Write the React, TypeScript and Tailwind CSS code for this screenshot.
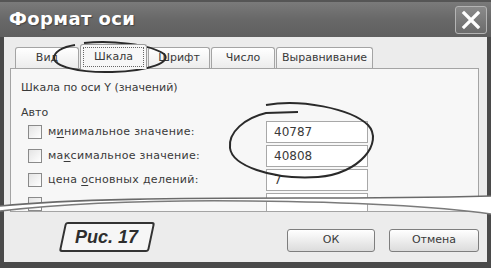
import React from 'react';

const tabs = [
  { label: 'Вид', w: 'w-[64px]', active: false },
  { label: 'Шкала', w: 'w-[67px]', active: true },
  { label: 'Шрифт', w: 'w-[62px]', active: false },
  { label: 'Число', w: 'w-[64px]', active: false },
  { label: 'Выравнивание', w: 'w-[97px]', active: false },
];

function Mnemonic({ before, key_, after }: { before: string; key_: string; after: string }) {
  return (
    <span>
      {before}
      <span className="underline underline-offset-2">{key_}</span>
      {after}
    </span>
  );
}

const rows = [
  { label: <Mnemonic before="м" key_="и" after="нимальное значение:" />, value: '40787' },
  { label: <Mnemonic before="ма" key_="к" after="симальное значение:" />, value: '40808' },
  { label: <Mnemonic before="цена " key_="о" after="сновных делений:" />, value: '7' },
  { label: null, value: '' },
];

export default function App() {
  return (
    <div
      className="relative w-[491px] h-[268px] overflow-hidden bg-[#4a4a4a] flex flex-col text-[#3a3a3a]"
      style={{ fontFamily: '"DejaVu Sans", Verdana, sans-serif' }}
    >
      {/* title bar */}
      <div className="h-[37px] flex justify-between bg-gradient-to-b from-[#7a7a7a] via-[#686868] to-[#5f5f5f] border-t-2 border-[#555]">
        <div className="pl-[9px] pt-[5px] text-[18px] leading-[24px] font-semibold text-white tracking-[0.4px] [text-shadow:1px_1px_1px_#444]">
          Формат оси
        </div>
        <div className="mt-[4px] mr-[4px] w-[32px] h-[28px] rounded-[3px] border border-[#b4b4b4] bg-gradient-to-b from-[#8a8a8a] to-[#6c6c6c] flex items-center justify-center">
          <svg width="20" height="20" viewBox="0 0 20 20">
            <path d="M3 3 L17 17 M17 3 L3 17" stroke="white" strokeWidth="3.2" strokeLinecap="square" />
          </svg>
        </div>
      </div>

      {/* body */}
      <div className="flex-1 mx-[4px] mb-[6px] bg-[#ececec] flex flex-col">
        {/* tabs */}
        <div className="h-[31px] pt-[7px] pl-[11px] flex items-end gap-[1px] text-[11px]">
          {tabs.map((t) =>
            t.active ? (
              <div
                key={t.label}
                className={`${t.w} h-[25px] -mb-px z-10 rounded-t-[3px] border border-b-0 border-[#9c9c9c] bg-[#f7f7f7] p-[2px]`}
              >
                <div className="h-full border border-dotted border-[#666] flex items-center justify-center">
                  {t.label}
                </div>
              </div>
            ) : (
              <div
                key={t.label}
                className={`${t.w} h-[21px] rounded-t-[3px] border border-b-0 border-[#a4a4a4] bg-gradient-to-b from-white to-[#ececec] flex items-center justify-center`}
              >
                {t.label}
              </div>
            )
          )}
        </div>

        {/* panel */}
        <div className="ml-[6px] mr-[8px] h-[144px] border border-[#a4a4a4] bg-[#f7f7f7] overflow-hidden pl-[10px] pt-[12px] text-[11px]">
          <div className="h-[14px] leading-[14px]">Шкала по оси Y (значений)</div>
          <div className="mt-[11px] h-[14px] leading-[14px]">Авто</div>
          <div className="mt-[1px] flex flex-col gap-[2px]">
            {rows.map((r, i) => (
              <div key={i} className="h-[22px] flex items-center">
                <div className="ml-[7px] w-[14px] h-[14px] border border-[#8a8a8a] bg-gradient-to-br from-[#e4e4e4] to-white" />
                <div className="ml-[6px] w-[218px] tracking-[0.3px]">{r.label}</div>
                <div className="w-[102px] h-[22px] border border-[#a8a8a8] bg-white pl-[7px] flex items-center text-[12px]">
                  {r.value}
                </div>
              </div>
            ))}
          </div>
        </div>

        {/* bottom bar */}
        <div className="flex-1 flex items-start">
          <div className="ml-[58px] mt-[10px] w-[90px] h-[30px] -skew-x-12 rounded-[3px] border-2 border-[#333] bg-[#f6f6f6] flex items-center justify-center">
            <span
              className="skew-x-12 text-[18px] font-bold italic text-[#2e2e2e]"
              style={{ fontFamily: '"Liberation Sans", Arial, sans-serif' }}
            >
              Рис. 17
            </span>
          </div>
          <div className="ml-auto mr-[8px] mt-[17px] flex gap-[14px] text-[11px]">
            <div className="w-[88px] h-[23px] rounded-[3px] border border-[#7e7e7e] bg-gradient-to-b from-white to-[#dcdcdc] flex items-center justify-center">
              ОК
            </div>
            <div className="w-[90px] h-[23px] rounded-[3px] border border-[#7e7e7e] bg-gradient-to-b from-white to-[#dcdcdc] flex items-center justify-center">
              Отмена
            </div>
          </div>
        </div>
      </div>

      {/* hand-drawn marks and page tear */}
      <svg className="absolute inset-0 pointer-events-none" width="491" height="268" viewBox="0 0 491 268">
        <path
          d="M0 206 C 70 199 180 198 300 198 C 390 198 450 197 491 196 L491 214 C 440 207 360 202 250 201 C 160 200 70 203 0 211 Z"
          fill="white"
        />
        <path d="M0 206 C 70 199 180 198 300 198 C 390 198 450 197 491 196" fill="none" stroke="#6a6a6a" strokeWidth="1.6" />
        <path d="M0 211 C 70 203 160 200 250 201 C 360 202 440 207 491 214" fill="none" stroke="#7a7a7a" strokeWidth="1.4" />

        <path
          d="M84 43 C 110 40 150 44 164 54 C 172 62 150 71 112 72 C 78 73 54 66 54 58 C 54 52 62 47 75 45"
          fill="none"
          stroke="#2a2a2a"
          strokeWidth="2"
        />
        <path
          d="M266 105 C 300 99 350 108 368 125 C 384 142 360 174 318 177 C 270 180 232 165 230 148 C 228 132 245 118 266 113 L 298 112"
          fill="none"
          stroke="#2a2a2a"
          strokeWidth="2"
        />
      </svg>
    </div>
  );
}
